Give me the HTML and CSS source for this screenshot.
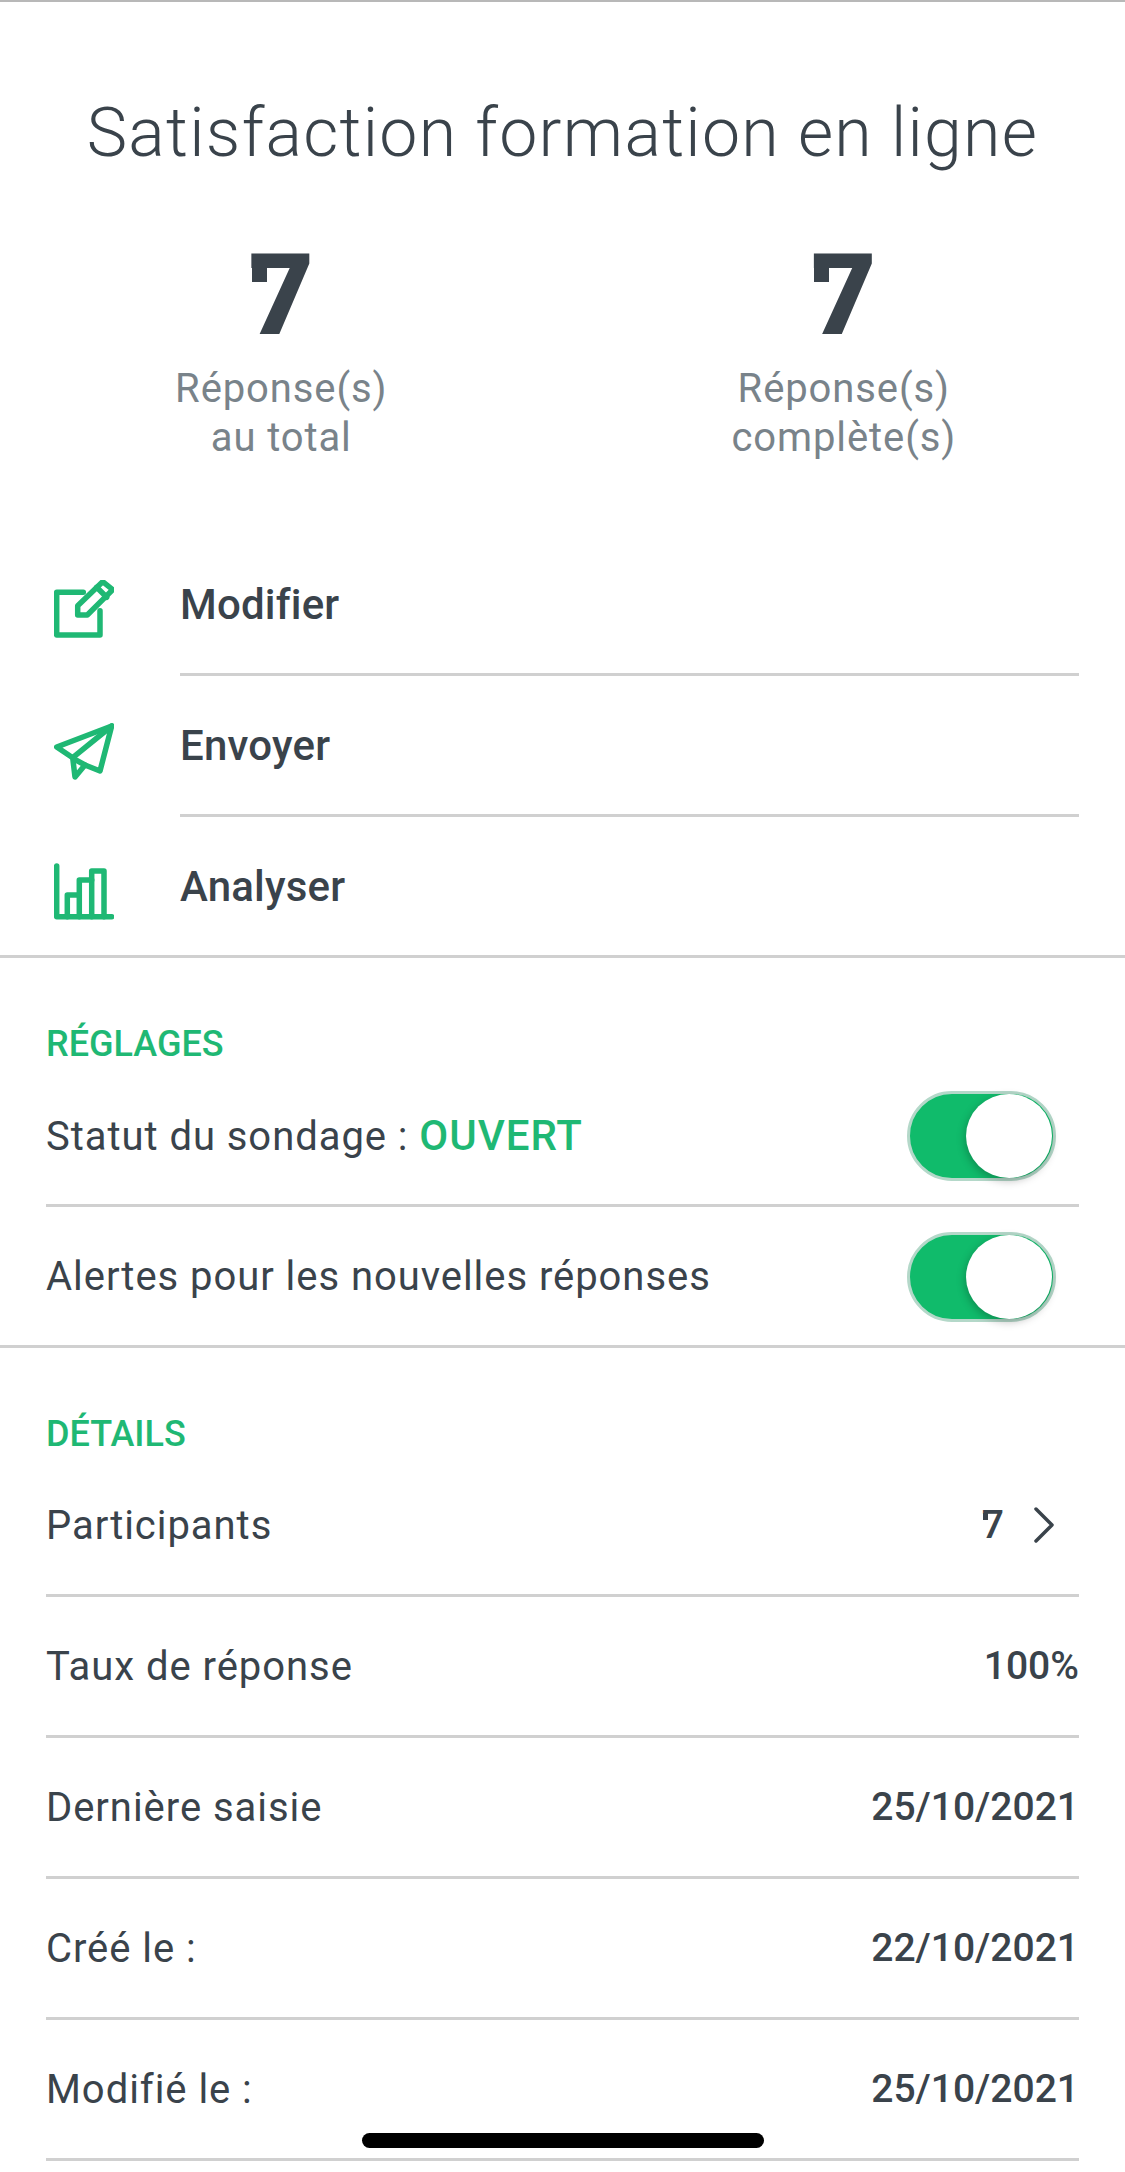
FILE: index.html
```html
<!DOCTYPE html>
<html lang="fr">
<head>
    <meta charset="UTF-8">
    <meta name="viewport" content="width=device-width, initial-scale=1.0">
    <title>Satisfaction formation en ligne</title>
    <link rel="stylesheet" href="styles.css">
</head>
<body>
    <div class="page">
        <h1 class="title">Satisfaction formation en ligne</h1>

        <div class="stats">
            <div class="stat">
                <div class="stat-number"><span class="seven">7</span></div>
                <div class="stat-label">Réponse(s)<br>au total</div>
            </div>
            <div class="stat">
                <div class="stat-number"><span class="seven">7</span></div>
                <div class="stat-label">Réponse(s)<br>complète(s)</div>
            </div>
        </div>

        <div class="actions">
            <div class="action">
                <svg class="action-icon" viewBox="0 0 60 60">
                    <path d="M29.3 12.3H2.7V55H46V30.7"/>
                    <path d="M48.7 1.7L58.7 9.7L33.3 35H23.7V25.7Z"/>
                    <path d="M42.7 7.3L52.7 17.3"/>
                </svg>
                <div class="action-label">Modifier</div>
            </div>
            <div class="action">
                <svg class="action-icon" viewBox="0 0 60 60">
                    <path d="M57.7 5L2.7 26L18.7 36.7L21 56L31 44L46 50Z"/>
                    <path d="M57.7 5L18.7 36.7"/>
                    <path d="M20 38L31 44"/>
                </svg>
                <div class="action-label">Envoyer</div>
            </div>
            <div class="action">
                <svg class="action-icon" viewBox="0 0 60 60">
                    <path d="M2.7 6V56.7H57.7"/>
                    <path d="M13.3 56.7V35H25.3V56.7"/>
                    <path d="M25.3 35V20H37.7V56.7"/>
                    <path d="M37.7 20V11H50V56.7"/>
                </svg>
                <div class="action-label">Analyser</div>
            </div>
        </div>

        <div class="section section-settings">
            <div class="section-title">RÉGLAGES</div>
            <div class="row">
                <div class="row-label">Statut du sondage : <span class="status">OUVERT</span></div>
                <div class="toggle"><span class="knob"></span></div>
            </div>
            <div class="row">
                <div class="row-label">Alertes pour les nouvelles réponses</div>
                <div class="toggle"><span class="knob"></span></div>
            </div>
        </div>

        <div class="section">
            <div class="section-title">DÉTAILS</div>
            <div class="row">
                <div class="row-label">Participants</div>
                <div class="row-link">
                    <span class="row-value"><span class="seven">7</span></span>
                    <svg class="chevron" viewBox="0 0 20 36">
                        <path d="M2 2L18 18L2 34"/>
                    </svg>
                </div>
            </div>
            <div class="row">
                <div class="row-label">Taux de réponse</div>
                <div class="row-value">100%</div>
            </div>
            <div class="row">
                <div class="row-label">Dernière saisie</div>
                <div class="row-value">25/10/2021</div>
            </div>
            <div class="row">
                <div class="row-label">Créé le :</div>
                <div class="row-value">22/10/2021</div>
            </div>
            <div class="row">
                <div class="row-label">Modifié le :</div>
                <div class="row-value">25/10/2021</div>
            </div>
        </div>

        <div class="home-bar"></div>
    </div>
</body>
</html>
```
FILE: styles.css
```css
body {
    margin: 0;
    font-family: Roboto, Arial, sans-serif;
    background-color: #fff;
    color: #3a434b;
}

.page {
    position: relative;
    height: 2170px;
    overflow: hidden;
    border-top: 2px solid #b8b8b8;
}

.title {
    margin: 0;
    padding-top: 91px;
    font-size: 68px;
    line-height: 80px;
    font-weight: 300;
    letter-spacing: 1.3px;
    text-align: center;
}

/* Stats */
.stats {
    display: flex;
    margin-top: 68px;
}

.stat {
    flex: 1;
    text-align: center;
}

.stat-number {
    font-size: 113px;
    line-height: 110px;
    font-weight: 900;
}

/* the serif on the left of the bar */
.seven {
    position: relative;
    display: inline-block;
}

.seven:before {
    content: "";
    position: absolute;
    left: 0.03em;
    top: 50%;
    width: 0.13em;
    height: 0.2em;
    margin-top: -0.32em;
    background-color: currentColor;
}

.stat-label {
    margin-top: 13px;
    font-size: 40px;
    line-height: 49px;
    letter-spacing: 0.9px;
    color: #79838a;
}

/* Actions */
.actions {
    margin-top: 73px;
    border-bottom: 3px solid #d0d0d0;
}

.action {
    display: flex;
    align-items: center;
    height: 141px;
    padding-left: 54px;
}

.action:last-child {
    height: 138px;
}

.action-icon {
    width: 60px;
    height: 60px;
    margin-top: 8px;
    margin-right: 66px;
    fill: none;
    stroke: #1fb874;
    stroke-width: 5.5;
    stroke-linecap: round;
    stroke-linejoin: round;
}

.action-label {
    flex: 1;
    align-self: stretch;
    display: flex;
    align-items: center;
    margin-right: 46px;
    font-size: 42px;
    font-weight: 500;
    letter-spacing: 0.2px;
    border-bottom: 3px solid #d0d0d0;
}

.action:last-child .action-label {
    border-bottom: none;
}

/* Sections */
.section {
    padding: 0 46px;
}

.section-settings {
    border-bottom: 3px solid #d0d0d0;
}

.section-title {
    padding-top: 66px;
    height: 42px;
    line-height: 40px;
    font-size: 36px;
    font-weight: 500;
    color: #1fb874;
}

.row {
    display: flex;
    align-items: center;
    justify-content: space-between;
    height: 138px;
    border-bottom: 3px solid #d0d0d0;
}

.section-settings .row:last-child {
    border-bottom: none;
}

.row-label {
    font-size: 40px;
    letter-spacing: 0.95px;
}

.row-value {
    font-size: 39px;
    font-weight: 500;
}

.status {
    font-size: 42px;
    font-weight: 500;
    color: #1fb874;
}

.row-link {
    display: flex;
    align-items: center;
    padding-right: 25px;
}

.chevron {
    width: 20px;
    height: 36px;
    margin-left: 30px;
    fill: none;
    stroke: #3a434b;
    stroke-width: 3.5;
    stroke-linecap: round;
    stroke-linejoin: round;
}

/* Toggle Switch */
.toggle {
    position: relative;
    width: 143px;
    height: 84px;
    margin-top: 2px;
    margin-right: 23px;
    background-color: #10bb6b;
    border: 3px solid #b4d8c9;
    border-radius: 45px;
}

.knob {
    position: absolute;
    top: 0;
    right: 1px;
    width: 86px;
    height: 84px;
    background-color: #fff;
    border-radius: 50%;
    box-shadow: -1px 3px 8px rgba(0, 0, 0, 0.25);
}

.home-bar {
    position: absolute;
    left: 362px;
    top: 2131px;
    width: 402px;
    height: 15px;
    background-color: #000;
    border-radius: 8px;
}
```
